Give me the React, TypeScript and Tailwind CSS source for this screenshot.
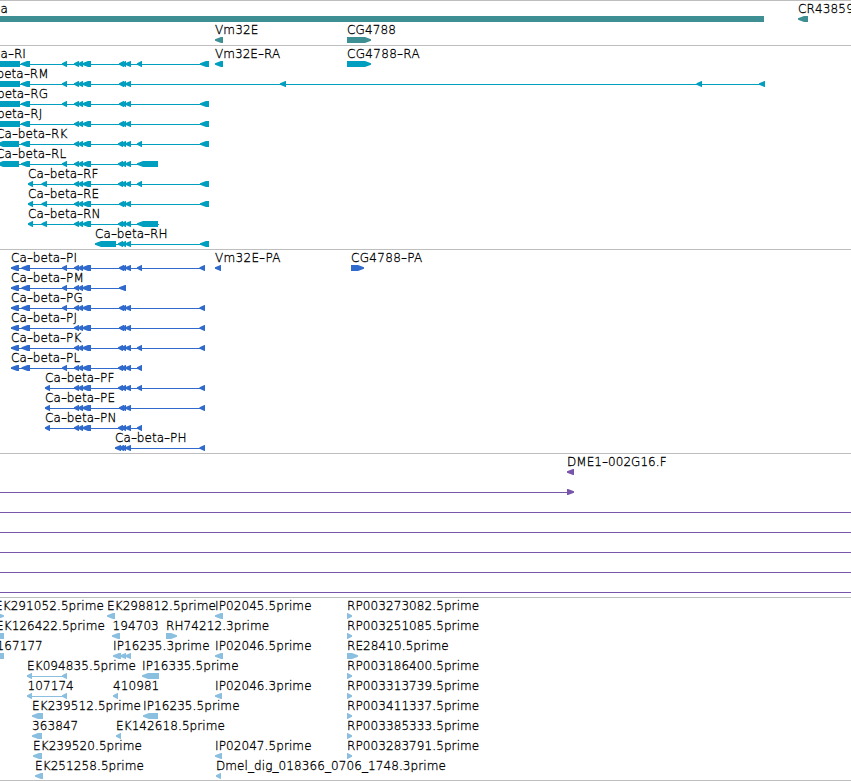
type Dir = "left" | "right" | "none";

// start, end, direction (left by default)
type Block = [number, number, Dir?];

type Feature = {
  label?: string;
  x?: number;
  wide?: boolean;
  blocks: Block[];
  line?: [number, number];
};

type Lane = Feature[];

const EXON_A: Block[] = [[74, 79], [78, 83], [82, 91]];
const EXON_B: Block[] = [[119, 124], [121.5, 126], [125, 131]];
const EXON_C: Block[] = [[118, 123], [121, 126], [125, 131]];
const SMALL: Block = [62, 67];
const MID: Block = [137, 142];
const LAST: Block = [200, 209];
const CDS_LAST: Block = [199.5, 205];
const CDS_FIRST: Block[] = [[11, 19], [21.5, 30]];

const genes: Lane[] = [
  [
    { label: "a", x: 0.5, blocks: [[0, 764, "none"]] },
    { label: "CR43859", x: 798, blocks: [[798, 808]] }
  ],
  [
    { label: "Vm32E", x: 215, blocks: [[215, 223]] },
    { label: "CG4788", x: 347, blocks: [[347, 371, "right"]] }
  ]
];

const transcripts: Lane[] = [
  [
    {
      label: "a-RI",
      x: 0.5,
      line: [0, 209],
      blocks: [[0, 20, "none"], [21, 30], SMALL, ...EXON_A, ...EXON_B, MID, LAST]
    },
    { label: "Vm32E-RA", x: 215, blocks: [[215, 223]] },
    { label: "CG4788-RA", x: 347, wide: true, blocks: [[347, 371, "right"]] }
  ],
  [
    {
      label: "beta-RM",
      x: -3.5,
      line: [0, 765],
      blocks: [[0, 20, "none"], [21, 30], SMALL, ...EXON_A, ...EXON_B, [280, 286], [696.5, 702], [759, 765]]
    }
  ],
  [
    {
      label: "beta-RG",
      x: -3,
      line: [0, 209],
      blocks: [[0, 20, "none"], [21, 30], SMALL, ...EXON_A, ...EXON_B, LAST]
    }
  ],
  [
    {
      label: "beta-RJ",
      x: -3,
      line: [0, 209],
      blocks: [[0, 20, "none"], [21, 30], ...EXON_A, ...EXON_B, LAST]
    }
  ],
  [
    {
      label: "Ca-beta-RK",
      x: -4,
      line: [0, 209],
      blocks: [[-3, 19], [21, 30], ...EXON_A, ...EXON_C, MID, LAST]
    }
  ],
  [
    {
      label: "Ca-beta-RL",
      x: -4,
      line: [0, 158],
      blocks: [[-3, 19], [21, 30], SMALL, ...EXON_A, ...EXON_C, [137, 158]]
    }
  ],
  [
    {
      label: "Ca-beta-RF",
      x: 28,
      line: [28, 209],
      blocks: [[28, 33], [41.5, 47], ...EXON_A, ...EXON_C, MID, LAST]
    }
  ],
  [
    {
      label: "Ca-beta-RE",
      x: 28,
      line: [28, 209],
      blocks: [[28, 33], [41.5, 47], ...EXON_A, ...EXON_B, LAST]
    }
  ],
  [
    {
      label: "Ca-beta-RN",
      x: 28,
      line: [28, 159],
      blocks: [[28, 33], [41.5, 47], ...EXON_A, ...EXON_C, [137, 158]]
    }
  ],
  [
    {
      label: "Ca-beta-RH",
      x: 95,
      line: [95, 209],
      blocks: [[95, 116], ...EXON_C, LAST]
    }
  ]
];

const proteins: Lane[] = [
  [
    {
      label: "Ca-beta-PI",
      x: 11,
      line: [11, 205],
      blocks: [...CDS_FIRST, SMALL, ...EXON_A, ...EXON_B, MID, CDS_LAST]
    },
    { label: "Vm32E-PA", x: 215, wide: true, blocks: [[215, 221]] },
    { label: "CG4788-PA", x: 351, wide: true, blocks: [[351, 364, "right"]] }
  ],
  [
    {
      label: "Ca-beta-PM",
      x: 11,
      line: [11, 126],
      blocks: [...CDS_FIRST, SMALL, ...EXON_A, [119, 126]]
    }
  ],
  [
    {
      label: "Ca-beta-PG",
      x: 11,
      line: [11, 205],
      blocks: [...CDS_FIRST, SMALL, ...EXON_A, ...EXON_B, CDS_LAST]
    }
  ],
  [
    {
      label: "Ca-beta-PJ",
      x: 11,
      line: [11, 205],
      blocks: [...CDS_FIRST, ...EXON_A, ...EXON_B, CDS_LAST]
    }
  ],
  [
    {
      label: "Ca-beta-PK",
      x: 11,
      line: [11, 205],
      blocks: [...CDS_FIRST, ...EXON_A, ...EXON_C, MID, CDS_LAST]
    }
  ],
  [
    {
      label: "Ca-beta-PL",
      x: 11,
      line: [11, 142],
      blocks: [...CDS_FIRST, SMALL, ...EXON_A, ...EXON_C, MID]
    }
  ],
  [
    {
      label: "Ca-beta-PF",
      x: 45,
      line: [45, 205],
      blocks: [[45, 50], ...EXON_A, ...EXON_C, MID, CDS_LAST]
    }
  ],
  [
    {
      label: "Ca-beta-PE",
      x: 45,
      line: [45, 205],
      blocks: [[45, 50], ...EXON_A, ...EXON_B, CDS_LAST]
    }
  ],
  [
    {
      label: "Ca-beta-PN",
      x: 45,
      line: [45, 142],
      blocks: [[45, 50], ...EXON_A, ...EXON_C, MID]
    }
  ],
  [
    {
      label: "Ca-beta-PH",
      x: 115,
      line: [115, 205],
      blocks: [[115, 121], [119, 124], [122, 126], [125, 131], CDS_LAST]
    }
  ]
];

const FULL: Lane = [{ line: [0, 851], blocks: [] }];

const clones: Lane[] = [
  [{ label: "DME1-002G16.F", x: 567, blocks: [[567, 574]] }],
  [{ line: [0, 568], blocks: [[567, 574, "right"]] }],
  FULL,
  FULL,
  FULL,
  FULL,
  FULL
];

const ests: Lane[] = [
  [
    { label: "EK291052.5prime", x: -5, blocks: [[-4, 4, "right"]] },
    { label: "EK298812.5prime", x: 107, blocks: [[107, 115]] },
    { label: "IP02045.5prime", x: 215, blocks: [[215, 223]] },
    { label: "RP003273082.5prime", x: 347, blocks: [[347, 352, "right"]] }
  ],
  [
    { label: "EK126422.5prime", x: -4, blocks: [[0, 4, "none"]] },
    { label: "194703", x: 112.5, blocks: [[112, 120]] },
    { label: "RH74212.3prime", x: 166, blocks: [[166, 177, "right"]] },
    { label: "RP003251085.5prime", x: 347, blocks: [[347, 352, "right"]] }
  ],
  [
    { label: "167177", x: -3.5, blocks: [[0, 4, "none"]] },
    { label: "IP16235.3prime", x: 113, blocks: [[113, 121], [120, 126], [125, 131]] },
    { label: "IP02046.5prime", x: 215, blocks: [[215, 223]] },
    { label: "RE28410.5prime", x: 347, blocks: [[347, 358, "right"]] }
  ],
  [
    { label: "EK094835.5prime", x: 27, line: [27, 67], blocks: [[27, 32], SMALL] },
    { label: "IP16335.5prime", x: 142, blocks: [[142, 159]] },
    { label: "RP003186400.5prime", x: 347, blocks: [[347, 352, "right"]] }
  ],
  [
    { label: "107174", x: 27.5, line: [27, 67], blocks: [[27, 32], SMALL] },
    { label: "410981", x: 113, blocks: [[113, 118]] },
    { label: "IP02046.3prime", x: 215, blocks: [[215, 222]] },
    { label: "RP003313739.5prime", x: 347, blocks: [[347, 352, "right"]] }
  ],
  [
    { label: "EK239512.5prime", x: 32, blocks: [[32, 43]] },
    { label: "IP16235.5prime", x: 143, blocks: [[143, 158]] },
    { label: "RP003411337.5prime", x: 347, blocks: [[347, 352, "right"]] }
  ],
  [
    { label: "363847", x: 32, blocks: [[32, 42]] },
    { label: "EK142618.5prime", x: 116, blocks: [[116, 121]] },
    { label: "RP003385333.5prime", x: 347, blocks: [[347, 352, "right"]] }
  ],
  [
    { label: "EK239520.5prime", x: 33, blocks: [[33, 42]] },
    { label: "IP02047.5prime", x: 215, blocks: [[215, 222]] },
    { label: "RP003283791.5prime", x: 347, blocks: [[347, 352, "right"]] }
  ],
  [
    { label: "EK251258.5prime", x: 35, blocks: [[35, 43]] },
    { label: "Dmel_dig_018366_0706_1748.3prime", x: 216, blocks: [[216, 221]] }
  ]
];

function blockPath([a, b, dir = "left"]: Block) {
  if (dir === "none") return `M${a} 13H${b}V19H${a}Z`;
  const head = Math.min(6, b - a - 0.5);
  if (dir === "right") {
    return `M${a} 13H${b - head}L${b} 15.3V16.7L${b - head} 19H${a}Z`;
  }
  return `M${b} 13H${a + head}L${a} 15.3V16.7L${a + head} 19H${b}Z`;
}

function Label({ text, x, wide }: { text: string; x?: number; wide?: boolean }) {
  return (
    <span
      className={`absolute top-0 whitespace-nowrap text-[12px] leading-[12px] font-extralight text-black [-webkit-text-stroke:0.3px_black] ${
        wide ? "tracking-[0.33px]" : ""
      }`}
      style={{ left: x }}
    >
      {text.split(/(-)/).map((part, i) =>
        part === "-" ? (
          <span key={i} className="inline-block w-[6px] origin-left scale-x-[1.4]">
            -
          </span>
        ) : (
          part
        )
      )}
    </span>
  );
}

function LaneRow({ lane, className }: { lane: Lane; className: string }) {
  return (
    <div className={`relative w-full ${className}`}>
      <svg width="851" height="20" className="block" fill="currentColor">
        {lane.map((f, i) => (
          <g key={i}>
            {f.line && (
              <rect x={f.line[0]} y="16" width={f.line[1] - f.line[0]} height="1" />
            )}
            {f.blocks.map((b, j) => (
              <path key={j} d={blockPath(b)} />
            ))}
          </g>
        ))}
      </svg>
      {lane.map(
        (f) => f.label && <Label key={f.label} text={f.label} x={f.x} wide={f.wide} />
      )}
    </div>
  );
}

function Track({
  lanes,
  color,
  spacing,
  laneClass = "h-5"
}: {
  lanes: Lane[];
  color: string;
  spacing: string;
  laneClass?: string;
}) {
  return (
    <section className={`border-t border-[#bebebe] pt-0.5 ${color} ${spacing}`}>
      {lanes.map((lane, i) => (
        <LaneRow key={i} lane={lane} className={laneClass} />
      ))}
    </section>
  );
}

export default function App() {
  return (
    <main className="flex h-[781px] w-[851px] flex-col overflow-hidden bg-white font-['DejaVu_Sans',sans-serif]">
      <Track lanes={genes} color="text-[#3d8f94]" spacing="tracking-[0.15px]" laneClass="h-[21px]" />
      <Track lanes={transcripts} color="text-[#009ebf]" spacing="pb-px tracking-[0.05px]" />
      <Track lanes={proteins} color="text-[#2f6acc]" spacing="pb-px tracking-[0.05px]" />
      <Track lanes={clones} color="text-[#7755aa]" spacing="pb-px tracking-[0.05px]" />
      <Track lanes={ests} color="text-[#8abfdf]" spacing="border-b tracking-[0.09px]" />
    </main>
  );
}
